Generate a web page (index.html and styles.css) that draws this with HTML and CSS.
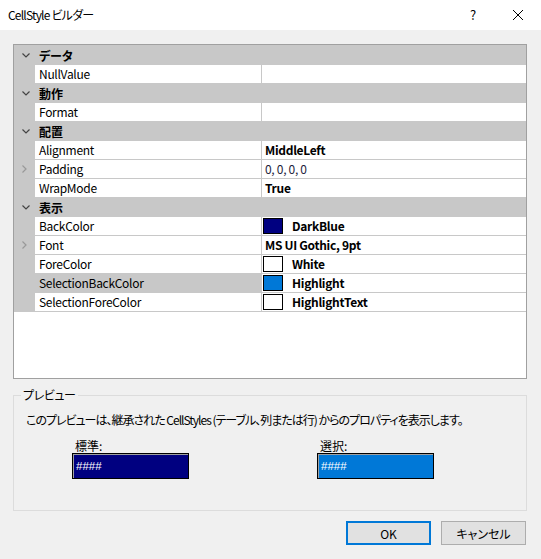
FILE: index.html
```html
<!DOCTYPE html>
<html lang="ja">
<head>
<meta charset="utf-8">
<link rel="stylesheet" href="styles.css">
</head>
<body>
<div class="window">
  <div class="titlebar">
    <span class="title">CellStyle ビルダー</span>
    <span class="help">?</span>
    <span class="close"><svg width="12" height="12" viewBox="0 0 12 12"><path d="M1 1 L11 11 M11 1 L1 11" stroke="#000" stroke-width="1" fill="none"/></svg></span>
  </div>
  <div class="content">
    <div class="grid">
      <div class="row cat first"><span class="margin"><svg class="down" width="8" height="5" viewBox="0 0 8 5"><path d="M0.5 0.5 L4 4 L7.5 0.5" stroke="#444" stroke-width="1.2" fill="none"/></svg></span><span class="catname">データ</span></div>
      <div class="row prop"><span class="margin"></span><span class="name">NullValue</span><span class="value"></span></div>
      <div class="row cat"><span class="margin"><svg class="down" width="8" height="5" viewBox="0 0 8 5"><path d="M0.5 0.5 L4 4 L7.5 0.5" stroke="#444" stroke-width="1.2" fill="none"/></svg></span><span class="catname">動作</span></div>
      <div class="row prop"><span class="margin"></span><span class="name">Format</span><span class="value"></span></div>
      <div class="row cat"><span class="margin"><svg class="down" width="8" height="5" viewBox="0 0 8 5"><path d="M0.5 0.5 L4 4 L7.5 0.5" stroke="#444" stroke-width="1.2" fill="none"/></svg></span><span class="catname">配置</span></div>
      <div class="row prop"><span class="margin"></span><span class="name">Alignment</span><span class="value bold">MiddleLeft</span></div>
      <div class="row prop"><span class="margin"><svg class="right" width="5" height="8" viewBox="0 0 5 8"><path d="M0.5 0.5 L4 4 L0.5 7.5" stroke="#999" stroke-width="1.2" fill="none"/></svg></span><span class="name">Padding</span><span class="value plain">0, 0, 0, 0</span></div>
      <div class="row prop"><span class="margin"></span><span class="name">WrapMode</span><span class="value bold">True</span></div>
      <div class="row cat"><span class="margin"><svg class="down" width="8" height="5" viewBox="0 0 8 5"><path d="M0.5 0.5 L4 4 L7.5 0.5" stroke="#444" stroke-width="1.2" fill="none"/></svg></span><span class="catname">表示</span></div>
      <div class="row prop"><span class="margin"></span><span class="name">BackColor</span><span class="value bold"><span class="swatch darkblue"></span>DarkBlue</span></div>
      <div class="row prop"><span class="margin"><svg class="right" width="5" height="8" viewBox="0 0 5 8"><path d="M0.5 0.5 L4 4 L0.5 7.5" stroke="#999" stroke-width="1.2" fill="none"/></svg></span><span class="name">Font</span><span class="value bold">MS UI Gothic, 9pt</span></div>
      <div class="row prop"><span class="margin"></span><span class="name">ForeColor</span><span class="value bold"><span class="swatch white"></span>White</span></div>
      <div class="row prop selected"><span class="margin"></span><span class="name">SelectionBackColor</span><span class="value bold"><span class="swatch highlight"></span>Highlight</span></div>
      <div class="row prop"><span class="margin"></span><span class="name">SelectionForeColor</span><span class="value bold"><span class="swatch white"></span>HighlightText</span></div>
    </div>

    <fieldset class="preview">
      <legend>プレビュー</legend>
      <p class="desc">このプレビューは、継承された CellStyles (テーブル、列または行) からのプロパティを表示します。</p>
      <div class="samples">
        <div class="sample">
          <div class="sample-label">標準:</div>
          <div class="sample-box normal">####</div>
        </div>
        <div class="sample">
          <div class="sample-label">選択:</div>
          <div class="sample-box sel">####</div>
        </div>
      </div>
    </fieldset>

    <div class="buttons">
      <button class="btn default">OK</button>
      <button class="btn">キャンセル</button>
    </div>
  </div>
</div>
</body>
</html>
```

FILE: styles.css
```css
* { box-sizing: border-box; }
html, body {
  margin: 0;
  padding: 0;
}
body {
  width: 541px;
  height: 559px;
  background: #f0f0f0;
  font-family: "Noto Sans CJK JP", "Noto Sans", sans-serif;
  font-size: 12px;
  font-feature-settings: "palt";
  color: #000;
  overflow: hidden;
}
.window {
  width: 541px;
  height: 559px;
  display: flex;
  flex-direction: column;
}
.titlebar {
  height: 30px;
  background: #fff;
  display: flex;
  align-items: center;
  padding-left: 8px;
}
.title {
  flex: 1;
  font-size: 12px;
  line-height: 16px;
  letter-spacing: -0.8px;
}
.help {
  width: 14px;
  text-align: center;
  font-size: 13px;
  line-height: 16px;
  margin-right: 32px;
}
.close {
  width: 12px;
  height: 12px;
  margin-right: 17px;
  display: flex;
}
.content {
  padding: 14px 14px 0 13px;
  display: flex;
  flex-direction: column;
}
.grid {
  height: 335px;
  border: 1px solid #a0a0a0;
  background: #fff;
  display: flex;
  flex-direction: column;
}
.row {
  display: flex;
  height: 19px;
  flex: none;
}
.row.cat {
  background: #c8c8c8;
  align-items: center;
}
.row.cat.first {
  height: 20px;
  padding-top: 1px;
}
.margin {
  width: 21px;
  flex: none;
  display: flex;
  align-items: center;
  justify-content: center;
  background: #c8c8c8;
  align-self: stretch;
}
.down { margin-left: 2px; }
.right { margin-left: 0px; }
.catname {
  padding-left: 4px;
  font-weight: 700;
  line-height: 18px;
}
.row.prop {
  border-bottom: 1px solid #c8c8c8;
}
.name {
  width: 227px;
  flex: none;
  padding-left: 4px;
  line-height: 18px;
  border-right: 1px solid #c8c8c8;
  white-space: nowrap;
  letter-spacing: -0.3px;
}
.row.selected .name {
  background: #c8c8c8;
}
.value {
  flex: 1;
  padding-left: 3px;
  line-height: 18px;
  display: flex;
  align-items: center;
  white-space: nowrap;
  letter-spacing: -0.3px;
}
.value.bold { font-weight: 700; }
.value.plain { color: #1e1e3c; }
.swatch {
  width: 20px;
  height: 16px;
  border: 1px solid #000;
  margin-left: -2px;
  margin-right: 9px;
  flex: none;
}
.swatch.darkblue { background: #000080; }
.swatch.white { background: #fff; }
.swatch.highlight { background: #0078d7; }

.preview {
  margin: 8px 0 0 0;
  padding: 0 12px 29px 12px;
  border: 1px solid #dcdcdc;
  min-width: 0;
  height: 124px;
}
.preview legend {
  padding: 0 2px;
  margin-left: -5px;
  line-height: 16px;
  letter-spacing: -0.4px;
}
.desc {
  margin: 9px 0 0 0;
  line-height: 16px;
  white-space: nowrap;
  letter-spacing: -1px;
}
.samples {
  display: flex;
  margin-top: 10px;
  padding-left: 46px;
  gap: 128px;
}
.sample {
  display: flex;
  flex-direction: column;
}
.sample-label {
  line-height: 15px;
  padding-left: 3px;
}
.sample-box {
  width: 117px;
  height: 26px;
  border: 1px solid #000;
  box-shadow: inset 1px 1px 0 #a0a0a0;
  color: #fff;
  font-family: "Liberation Sans", sans-serif;
  font-size: 11.5px;
  line-height: 24px;
  padding-left: 3px;
}
.sample-box.normal { background: #000080; }
.sample-box.sel { background: #0078d7; }

.buttons {
  display: flex;
  justify-content: flex-end;
  gap: 10px;
  margin-top: 10px;
  margin-right: 1px;
}
.btn {
  width: 85px;
  height: 24px;
  background: #e1e1e1;
  border: 1px solid #adadad;
  font-family: "Noto Sans CJK JP", sans-serif;
  font-feature-settings: "palt";
  font-size: 12px;
  color: #000;
  padding: 0;
  margin: 0;
}
.btn.default {
  border: 2px solid #0078d7;
}
```
